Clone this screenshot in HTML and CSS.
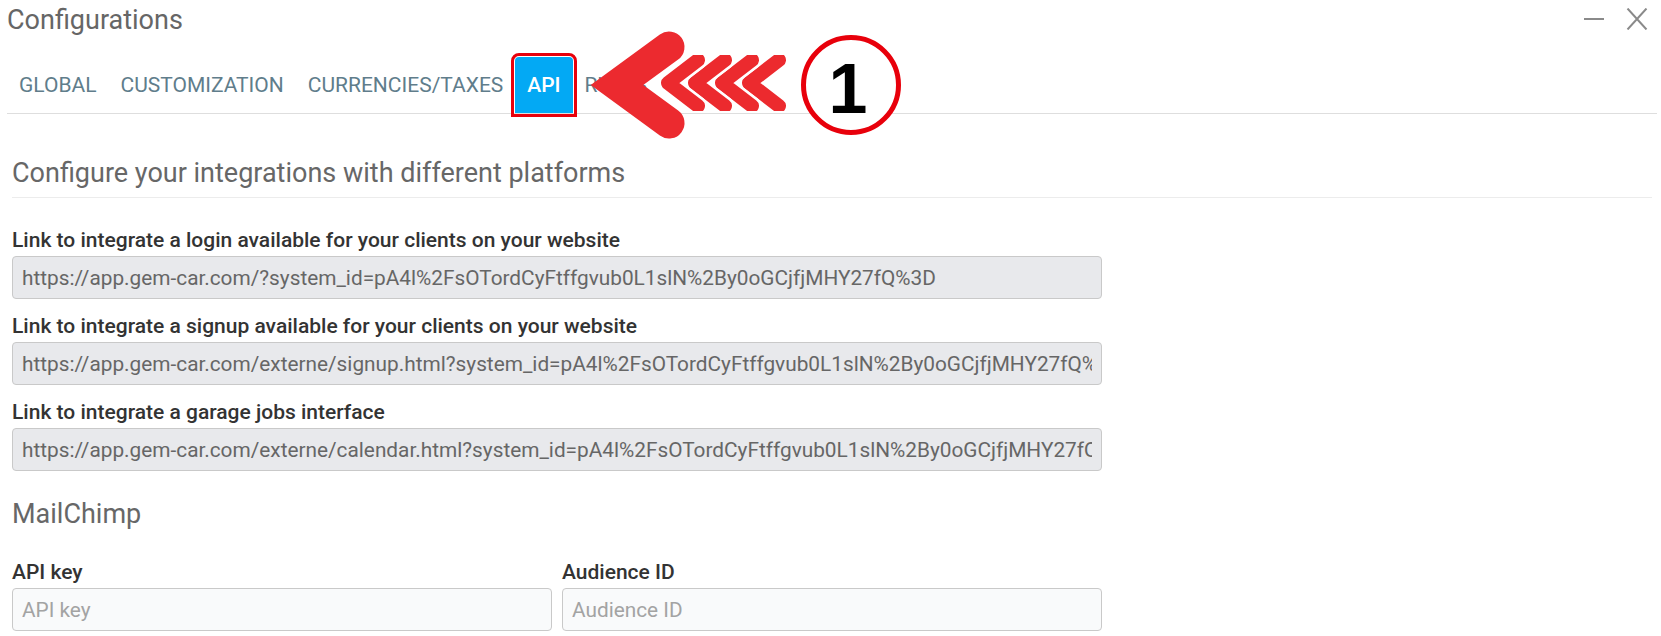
FILE: index.html
```html
<!DOCTYPE html>
<html lang="en">
<head>
<meta charset="utf-8">
<title>Configurations</title>
<link rel="stylesheet" href="styles.css">
</head>
<body>
<div class="window">
  <header class="title-bar">
    <h1 class="title">Configurations</h1>
    <div class="controls">
      <svg class="ctl" width="22" height="22" viewBox="0 0 22 22"><line x1="1" y1="11" x2="21" y2="11" stroke="#8a8a8a" stroke-width="2"/></svg>
      <svg class="ctl" width="22" height="22" viewBox="0 0 22 22"><path d="M1.5 0.5 L20.5 21.5 M20.5 0.5 L1.5 21.5" stroke="#8a8a8a" stroke-width="2" fill="none"/></svg>
    </div>
  </header>

  <nav class="tabs">
    <span class="tab">Global</span>
    <span class="tab">Customization</span>
    <span class="tab">Currencies/Taxes</span>
    <span class="tab active">API</span>
    <span class="tab">Rules</span>
  </nav>

  <main class="content">
    <h2 class="section-title">Configure your integrations with different platforms</h2>
    <div class="form">
      <div class="field">
        <label class="label">Link to integrate a login available for your clients on your website</label>
        <input class="input readonly" type="text" readonly value="https://app.gem-car.com/?system_id=pA4l%2FsOTordCyFtffgvub0L1slN%2By0oGCjfjMHY27fQ%3D">
      </div>
      <div class="field">
        <label class="label">Link to integrate a signup available for your clients on your website</label>
        <input class="input readonly" type="text" readonly value="https://app.gem-car.com/externe/signup.html?system_id=pA4l%2FsOTordCyFtffgvub0L1slN%2By0oGCjfjMHY27fQ%3D">
      </div>
      <div class="field">
        <label class="label">Link to integrate a garage jobs interface</label>
        <input class="input readonly" type="text" readonly value="https://app.gem-car.com/externe/calendar.html?system_id=pA4l%2FsOTordCyFtffgvub0L1slN%2By0oGCjfjMHY27fQ%3D">
      </div>

      <h2 class="sub-title">MailChimp</h2>
      <div class="row">
        <div class="field">
          <label class="label">API key</label>
          <input class="input" type="text" placeholder="API key">
        </div>
        <div class="field">
          <label class="label">Audience ID</label>
          <input class="input" type="text" placeholder="Audience ID">
        </div>
      </div>
    </div>
  </main>

  <svg class="annotation" width="340" height="120" viewBox="575 25 340 120">
    <defs>
      <filter id="soft" x="-10%" y="-10%" width="120%" height="120%">
        <feGaussianBlur stdDeviation="0.6"/>
      </filter>
    </defs>
    <g fill="none" stroke-linecap="round" stroke-linejoin="round" filter="url(#soft)">
      <path d="M779 60 L749 83 L779 106" stroke="#fff" stroke-width="19"/>
      <path d="M779 60 L749 83 L779 106" stroke="#ec2a2f" stroke-width="14"/>
      <path d="M752 60 L722 83 L752 106" stroke="#fff" stroke-width="19"/>
      <path d="M752 60 L722 83 L752 106" stroke="#ec2a2f" stroke-width="14"/>
      <path d="M725 60 L695 83 L725 106" stroke="#fff" stroke-width="19"/>
      <path d="M725 60 L695 83 L725 106" stroke="#ec2a2f" stroke-width="14"/>
      <path d="M698 60 L668 83 L698 106" stroke="#fff" stroke-width="19"/>
      <path d="M698 60 L668 83 L698 106" stroke="#ec2a2f" stroke-width="14"/>
    </g>
    <path d="M669 47 L617 85 L669 123" fill="none" stroke="#ec2a2f" stroke-width="31" stroke-linecap="round" stroke-linejoin="miter"/>
    <circle cx="851" cy="85" r="47.5" fill="#fff" stroke="#e8000b" stroke-width="5"/>
    <text x="848" y="113" text-anchor="middle" class="step-num">1</text>
  </svg>
</div>
</body>
</html>
```

FILE: styles.css
```css
* { box-sizing: border-box; }

html, body {
  margin: 0;
  padding: 0;
  background: #fff;
}

body {
  font-family: Roboto, "Liberation Sans", sans-serif;
  color: #333;
}

.window {
  position: relative;
  padding: 4px 4px 0 7px;
  height: 636px;
  overflow: hidden;
}

.title-bar {
  display: flex;
  justify-content: space-between;
  align-items: center;
  height: 32px;
}

.title {
  margin: 0;
  font-size: 27px;
  line-height: 32px;
  font-weight: 400;
  color: #666;
}

.controls {
  display: flex;
  align-items: center;
  gap: 21px;
  margin-right: 9px;
  margin-top: -2px;
}

.ctl { display: block; }

.tabs {
  display: flex;
  margin-top: 21px;
  border-bottom: 1px solid #dedede;
}

.tab {
  display: block;
  height: 56px;
  line-height: 56px;
  padding: 0 12px;
  font-size: 21px;
  color: #607d8b;
  text-transform: uppercase;
  white-space: nowrap;
  border-radius: 4px 4px 0 0;
}

.tab.active {
  background: #03a9f4;
  color: #fff;
  font-weight: 500;
  outline: 3px solid #e8000b;
  outline-offset: 1px;
}

.content {
  margin: 0 5px 0 5px;
}

.section-title {
  margin: 43px 0 0 0;
  font-size: 27px;
  line-height: 32px;
  font-weight: 400;
  color: #676767;
  padding-bottom: 8px;
  border-bottom: 1px solid #ececec;
}

.form {
  width: 1090px;
  margin-top: 29px;
}

.field {
  margin-bottom: 14px;
}

.label {
  display: block;
  font-size: 21px;
  line-height: 26px;
  font-weight: 500;
  color: #333;
  margin-bottom: 3px;
}

.input {
  display: block;
  width: 100%;
  height: 43px;
  padding: 0 9px;
  border: 1px solid #c9c9c9;
  border-radius: 4px;
  background: #f9fafb;
  font-family: Roboto, "Liberation Sans", sans-serif;
  font-size: 20.8px;
  color: #666;
  outline: none;
}

.input::placeholder {
  color: #a3a3a3;
}

.input.readonly {
  background: #e8e9ec;
  color: #666;
}

.sub-title {
  margin: 27px 0 29px 0;
  font-size: 27px;
  line-height: 32px;
  font-weight: 400;
  color: #676767;
}

.row {
  display: grid;
  grid-template-columns: 1fr 1fr;
  gap: 10px;
}

.annotation {
  position: absolute;
  left: 575px;
  top: 25px;
}

.step-num {
  font-family: "Liberation Sans", Arial, sans-serif;
  font-weight: 700;
  font-size: 70px;
  fill: #000;
}
```
